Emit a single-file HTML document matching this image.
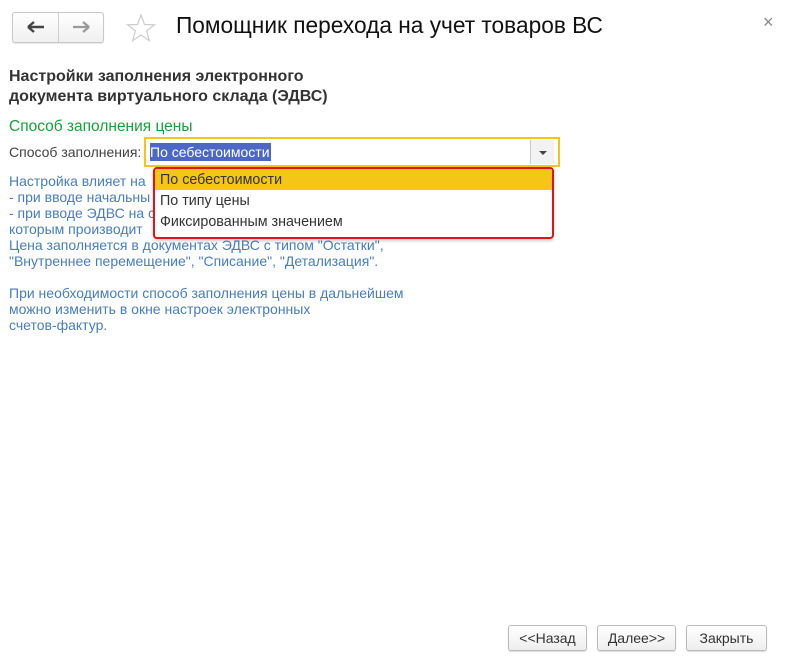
<!DOCTYPE html>
<html><head><meta charset="utf-8"><style>
body{margin:0;width:786px;height:658px;background:#fff;font-family:"Liberation Sans",Arial,sans-serif;position:relative;overflow:hidden;color:#333}
.a{position:absolute;white-space:nowrap}
.blue{color:#4a7eb9;font-size:14px;line-height:16px}
.btn{position:absolute;top:625px;height:24px;border:1px solid #bbb;border-radius:3px;background:linear-gradient(#fff,#eee);box-shadow:0 1px 1px rgba(0,0,0,.15);font-size:14px;line-height:24px;text-align:center;color:#333}
</style></head><body>
<div class="a" style="left:12px;top:12px;width:90px;height:29px;border:1px solid #c8c8c8;border-radius:3px;background:linear-gradient(#fff,#f0f0f0);box-shadow:0 1px 1px rgba(0,0,0,.1)"></div>
<div class="a" style="left:58px;top:13px;width:1px;height:29px;background:#d0d0d0"></div>
<svg class="a" style="left:26px;top:19px" width="20" height="16"><path d="M2 8H18M2 8L8 3M2 8L8 13" stroke="#444" stroke-width="2.4" fill="none"/></svg>
<svg class="a" style="left:71px;top:19px" width="20" height="16"><path d="M2 8H18M18 8L12 3M18 8L12 13" stroke="#999" stroke-width="2.2" fill="none"/></svg>
<svg class="a" style="left:125px;top:13px" width="32" height="30"><path d="M16 2L19.5 11.5L29.5 11.8L21.6 17.9L24.4 27.7L16 22L7.6 27.7L10.4 17.9L2.5 11.8L12.5 11.5Z" fill="none" stroke="#ccc" stroke-width="1.2"/></svg>
<div class="a" style="left:176px;top:12px;font-size:22.7px;color:#111">Помощник перехода на учет товаров ВС</div>
<div class="a" style="left:763px;top:12px;font-size:18px;color:#888">×</div>
<div class="a" style="left:9px;top:67px;font-size:16px;font-weight:bold;line-height:20px;color:#333">Настройки заполнения электронного<br>документа виртуального склада (ЭДВС)</div>
<div class="a" style="left:9px;top:118px;font-size:15.5px;color:#1a9f3c">Способ заполнения цены</div>
<div class="a" style="left:9px;top:144px;font-size:14px;color:#444">Способ заполнения:</div>
<div class="a" style="left:144px;top:137px;width:412px;height:26px;border:2px solid #f5c518;background:#fff"></div>
<div class="a" style="left:150px;top:143px;padding-right:1px;height:18px;background:#4c68c4;color:#fff;font-size:14px;line-height:18px">По себестоимости</div>
<div class="a" style="left:530px;top:140px;width:1px;height:24px;background:#ccc"></div>
<div class="a" style="left:531px;top:140px;width:23px;height:24px;background:#f2f2f2"></div>
<div class="a" style="left:539px;top:151px;width:0;height:0;border-left:4px solid transparent;border-right:4px solid transparent;border-top:4px solid #444"></div>
<div class="a blue" style="left:9px;top:173px">Настройка влияет на<br>- при вводе начальны<br>- при вводе ЭДВС на с<br>которым производит<br>Цена заполняется в документах ЭДВС с типом "Остатки",<br>"Внутреннее перемещение", "Списание", "Детализация".<br><br>При необходимости способ заполнения цены в дальнейшем<br>можно изменить в окне настроек электронных<br>счетов-фактур.</div>
<div class="a" style="left:153px;top:167px;width:397px;height:68px;border:2px solid #e0141e;border-radius:4px;background:#fff;box-shadow:0 2px 3px rgba(0,0,0,.2);overflow:hidden">
<div style="height:21px;background:#f5c518;font-size:14.3px;line-height:23px;padding-left:5px;color:#333">По себестоимости</div>
<div style="height:22px;font-size:14.3px;line-height:23px;padding-left:5px;color:#333">По типу цены</div>
<div style="height:22px;font-size:14.3px;line-height:21px;padding-left:5px;color:#333">Фиксированным значением</div>
</div>
<div class="btn" style="left:508px;width:77px">&lt;&lt;Назад</div>
<div class="btn" style="left:597px;width:77px">Далее&gt;&gt;</div>
<div class="btn" style="left:686px;width:79px">Закрыть</div>
</body></html>
